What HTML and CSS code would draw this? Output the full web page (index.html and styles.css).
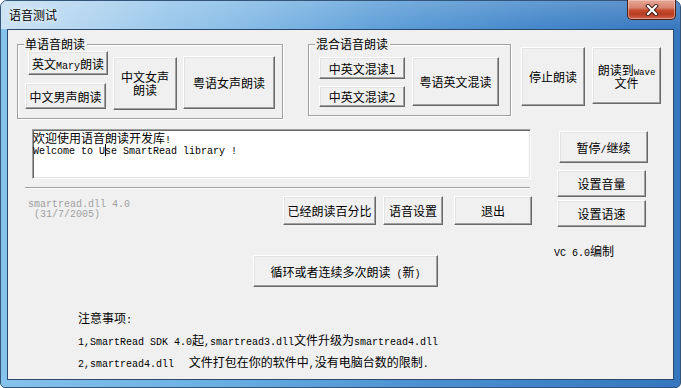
FILE: index.html
```html
<!DOCTYPE html>
<html lang="zh-CN">
<head>
<meta charset="utf-8">
<title>语音测试</title>
<link rel="stylesheet" href="styles.css">
</head>
<body>
<div class="window">
  <div class="titlebar">
    <span class="title">语音测试</span>
    <div class="close">
      <svg width="16" height="12" viewBox="0 0 16 12">
        <path d="M4 2 L12 10 M12 2 L4 10" stroke="#3a1a14" stroke-width="4" stroke-linecap="square"/>
        <path d="M4 2 L12 10 M12 2 L4 10" stroke="#ffffff" stroke-width="2.2" stroke-linecap="square"/>
      </svg>
    </div>
  </div>
  <div class="client">
    <div class="row1">
      <div class="group g1">
        <span class="glabel">单语音朗读</span>
        <div class="col c1">
          <div class="btn b-mary"><span>英文<span class="m">Mary</span>朗读</span></div>
          <div class="btn b-male">中文男声朗读</div>
        </div>
        <div class="btn b-female"><span>中文女声<br>朗读</span></div>
        <div class="btn b-yue">粤语女声朗读</div>
      </div>
      <div class="group g2">
        <span class="glabel">混合语音朗读</span>
        <div class="col c2">
          <div class="btn b-mix1">中英文混读1</div>
          <div class="btn b-mix2">中英文混读2</div>
        </div>
        <div class="btn b-yuemix">粤语英文混读</div>
      </div>
      <div class="btn b-stop">停止朗读</div>
      <div class="btn b-wave"><span>朗读到<span class="s">Wave</span><br>文件</span></div>
    </div>

    <div class="middle">
      <div class="left">
        <div class="edit">
          <div class="el1">欢迎使用语音朗读开发库<span class="m">!</span></div>
          <div class="el2">Welcome to U<span class="caret"></span>se SmartRead library !</div>
        </div>
        <div class="sep"></div>
        <div class="row3">
          <div class="version"><div>smartread.dll 4.0</div><div> (31/7/2005)</div></div>
          <div class="btn b-pct">已经朗读百分比</div>
          <div class="btn b-set">语音设置</div>
          <div class="btn b-exit">退出</div>
        </div>
        <div class="btn b-loop"><span>循环或者连续多次朗读<span class="m"> (</span>新<span class="m">)</span></span></div>
      </div>
      <div class="right">
        <div class="btn b-pause"><span>暂停<span class="m">/</span>继续</span></div>
        <div class="btn b-vol">设置音量</div>
        <div class="btn b-speed">设置语速</div>
        <div class="vc"><span class="m">VC 6.0</span>编制</div>
      </div>
    </div>

    <div class="notes">
      <div class="nl">注意事项<span class="m">:</span></div>
      <div class="nl"><span class="m">1,SmartRead SDK 4.0</span>起<span class="m">,smartread3.dll</span>文件升级为<span class="m">smartread4.dll</span></div>
      <div class="nl"><span class="m">2,smartread4.dll  </span> 文件打包在你的软件中<span class="m">,</span>没有电脑台数的限制<span class="m">.</span></div>
    </div>
  </div>
</div>
</body>
</html>
```

FILE: styles.css
```css
* { box-sizing: border-box; }

html, body {
  margin: 0;
  padding: 0;
  width: 681px;
  height: 388px;
  overflow: hidden;
  background: #ffffff;
}

body {
  font-family: "Noto Sans CJK SC", "Liberation Sans", sans-serif;
  font-size: 12px;
  color: #000;
}

.m {
  font-family: "Liberation Mono", "DejaVu Sans Mono", monospace;
  font-size: 10px;
  line-height: 0;
}

.s {
  font-family: "Liberation Mono", monospace;
  font-size: 9px;
  line-height: 0;
}

.window {
  width: 681px;
  height: 388px;
  border: 1px solid #33557a;
  border-radius: 7px 7px 5px 5px;
  padding: 0 6px 7px 6px;
  display: flex;
  flex-direction: column;
  background:
    linear-gradient(to bottom, rgba(255,255,255,0.18) 0px, rgba(255,255,255,0) 30px),
    linear-gradient(to right, #86c2ec 0%, #6cb0e3 30%, #4b91d1 62%, #3576be 100%);
}

.titlebar {
  height: 28px;
  flex: none;
  display: flex;
  align-items: flex-start;
  margin: 0 -6px;
  padding: 0 0 0 7px;
  background: linear-gradient(to right, rgba(225,236,246,0.75) 0%, rgba(200,222,242,0.45) 25%, rgba(170,205,236,0.15) 55%, rgba(255,255,255,0) 80%);
  border-radius: 6px 6px 0 0;
}

.title {
  margin-top: 6px;
  margin-left: 1px;
  line-height: 16px;
  font-size: 12px;
  color: #000;
  text-shadow: 0 0 6px rgba(255,255,255,0.9), 0 0 3px rgba(255,255,255,0.8);
}

.close {
  margin-left: auto;
  margin-right: 4px;
  margin-top: -1px;
  width: 49px;
  height: 20px;
  border: 1px solid #4c2118;
  border-top: none;
  border-radius: 0 0 5px 5px;
  display: flex;
  align-items: center;
  justify-content: center;
  background: linear-gradient(to bottom, #e6a898 0%, #d98470 40%, #c44a2d 55%, #b83c22 75%, #d0674c 100%);
  box-shadow: inset 0 0 0 1px rgba(255,220,210,0.45);
}

.close svg { display: block; }

.client {
  flex: 1;
  background: #f0f0f0;
  border: 1px solid #2b4a6b;
  display: flex;
  flex-direction: column;
}

/* buttons */
.btn {
  display: flex;
  align-items: center;
  justify-content: center;
  text-align: center;
  flex: none;
  background: #f0f0f0;
  border: 1px solid;
  border-color: #ffffff #696969 #696969 #ffffff;
  box-shadow: inset -1px -1px 0 #a0a0a0, inset 1px 1px 0 #e3e3e3;
  font-size: 12px;
  line-height: 13px;
  color: #000;
  white-space: pre;
}

/* row 1 */
.row1 {
  display: flex;
  align-items: flex-start;
  margin-top: 14px;
  padding-left: 9px;
  height: 75px;
  flex: none;
}

.group {
  position: relative;
  flex: none;
  display: flex;
  align-items: flex-start;
  border: 1px solid #a0a0a0;
  box-shadow: inset 1px 1px 0 #ffffff, 1px 1px 0 #ffffff;
}

.glabel {
  position: absolute;
  top: -8px;
  left: 6px;
  padding: 0 2px 0 1px;
  background: #f0f0f0;
  line-height: 14px;
  font-size: 12px;
}

.col {
  display: flex;
  flex-direction: column;
  align-items: flex-start;
  flex: none;
}

.g1 { width: 266px; height: 75px; padding-left: 7px; }
.c1 { margin-top: 6px; width: 81px; }
.b-mary { width: 80px; height: 24px; margin-left: 3px; }
.b-male { width: 81px; height: 26px; margin-top: 8px; }
.b-female { width: 64px; height: 53px; margin-left: 7px; margin-top: 12px; padding-bottom: 2px; }
.b-yue { width: 92px; height: 53px; margin-left: 6px; margin-top: 11px; }

.g2 { width: 203px; height: 72px; margin-left: 25px; padding-left: 10px; }
.c2 { margin-top: 12px; width: 86px; }
.b-mix1 { width: 86px; height: 22px; }
.b-mix2 { width: 86px; height: 21px; margin-top: 7px; }
.b-yuemix { width: 87px; height: 49px; margin-left: 7px; margin-top: 12px; }

.b-stop { width: 64px; height: 59px; margin-left: 10px; margin-top: 3px; }
.b-wave { width: 69px; height: 57px; margin-left: 7px; margin-top: 3px; }

/* middle */
.middle {
  display: flex;
  align-items: flex-start;
  flex: none;
}

.left {
  display: flex;
  flex-direction: column;
  align-items: flex-start;
  margin-left: 17px;
  width: 506px;
  flex: none;
}

.edit {
  margin-top: 10px;
  margin-left: 7px;
  width: 499px;
  height: 50px;
  background: #ffffff;
  border: 1px solid;
  border-color: #a0a0a0 #ffffff #ffffff #a0a0a0;
  box-shadow: inset 1px 1px 0 #696969, inset -1px -1px 0 #e3e3e3;
  padding: 1px 0 0 0;
}

.el1 {
  line-height: 13px;
  height: 13px;
  white-space: pre;
}

.el2 {
  font-family: "Liberation Mono", "DejaVu Sans Mono", monospace;
  font-size: 10px;
  line-height: 11px;
  height: 11px;
  white-space: pre;
}

.caret {
  display: inline-block;
  width: 1px;
  height: 12px;
  margin: 0 -1px -2px 0;
  background: #000;
}

.sep {
  margin-top: 8px;
  width: 505px;
  height: 2px;
  border-top: 1px solid #a0a0a0;
  border-bottom: 1px solid #ffffff;
}

.row3 {
  display: flex;
  align-items: flex-start;
  margin-top: 7px;
}

.version {
  width: 255px;
  margin-left: 3px;
  margin-top: 4px;
  color: #a0a0a0;
  font-family: "Liberation Mono", "DejaVu Sans Mono", monospace;
  font-size: 10px;
  line-height: 10px;
  white-space: pre;
}

.b-pct { width: 93px; height: 29px; }
.b-set { width: 60px; height: 29px; margin-left: 7px; }
.b-exit { width: 78px; height: 29px; margin-left: 11px; }

.b-loop { width: 185px; height: 32px; margin-left: 228px; margin-top: 30px; }

.right {
  display: flex;
  flex-direction: column;
  align-items: flex-start;
  margin-left: 26px;
  flex: none;
}

.b-pause { width: 89px; height: 32px; margin-left: 2px; margin-top: 12px; }
.b-vol { width: 89px; height: 27px; margin-top: 7px; }
.b-speed { width: 89px; height: 27px; margin-top: 3px; }

.vc {
  margin-top: 17px;
  margin-left: -3px;
  line-height: 14px;
  white-space: pre;
}

/* notes */
.notes {
  margin-top: 20px;
  margin-left: 70px;
  display: flex;
  flex-direction: column;
}

.nl {
  line-height: 22px;
  height: 22px;
  white-space: pre;
}
```
